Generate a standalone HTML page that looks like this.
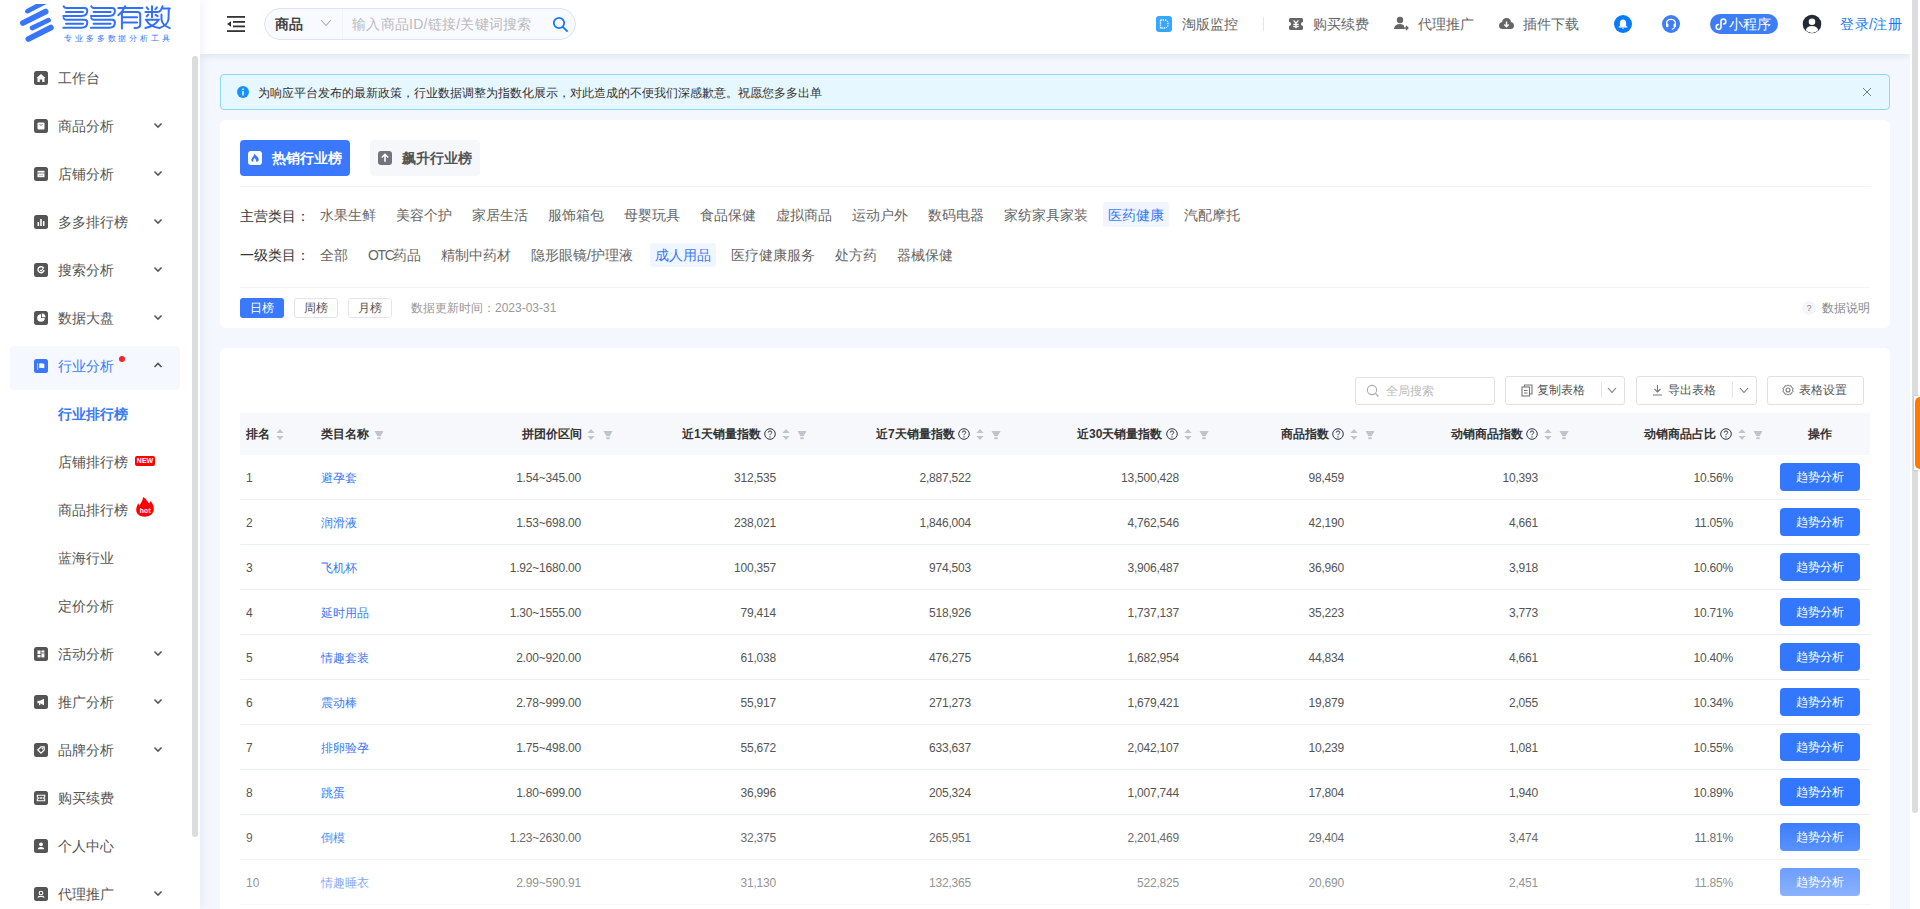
<!DOCTYPE html><html><head><meta charset="utf-8"><style>
*{margin:0;padding:0;box-sizing:border-box}
html,body{width:1920px;height:909px;overflow:hidden}
body{position:relative;background:#f4f7fd;font-family:"Liberation Sans",sans-serif;color:#333;font-size:14px}
.ab{position:absolute}
.t{position:absolute;white-space:nowrap}
.side{position:absolute;left:0;top:0;width:200px;height:909px;background:#fff;box-shadow:2px 0 10px rgba(40,60,140,.07);z-index:2}
.hdr{position:absolute;left:200px;top:0;width:1710px;height:54px;background:#fff;box-shadow:0 2px 7px rgba(40,60,130,.1)}
.mi{position:absolute;left:58px;font-size:14px;color:#555;line-height:20px;height:20px}
.ico{position:absolute;left:34px;width:14px;height:14px;background:#555;border-radius:3px}
.chev{position:absolute;left:154px;width:8px;height:6px}
.card{position:absolute;left:220px;width:1670px;background:#fff;border-radius:6px}
.cat{position:absolute;font-size:14px;color:#666;line-height:24px;height:24px;padding:0 5px;border-radius:3px}
.th{position:absolute;font-size:12px;font-weight:bold;color:#333;line-height:16px;top:426px}
.td{position:absolute;font-size:12px;color:#555;line-height:16px}
.btn{position:absolute;left:1780px;width:80px;height:28px;background:#3377ff;border-radius:4px;color:#fff;font-size:12px;line-height:28px;text-align:center}
</style></head><body>
<div class="side">
<svg class="ab" style="left:15px;top:0px" width="45" height="45" viewBox="0 0 45 45">
<g fill="#3875ff"><path d="M36 4 L46.5 4 L28.5 13.3 Q25.6 14.2 25 11.6 Q24.8 10 27 8.8Z" transform="translate(-15,0)"/></g>
<g stroke="#3875ff" stroke-linecap="round" fill="none" transform="translate(-15,0)">
<path d="M22.9 23 L45.6 11.6" stroke-width="5.8"/>
<path d="M32.2 28 L48.5 20.2" stroke-width="4.8"/>
<path d="M28.4 39 L50.8 27.6" stroke-width="5.8"/></g></svg>
<svg class="ab" style="left:0;top:0" width="180" height="34" viewBox="0 0 180 34"><g stroke="#3170ff" stroke-width="2" fill="none" stroke-linecap="round"><path d="M63.6 6.3 Q64.5 8 66.2 8 L84.5 8 Q87.3 8 87.3 10.8 Q87.3 16 81.5 16 L63.3 16 M66 11.9 L83 11.9 M63.6 18.1 Q64.5 19.8 66.2 19.8 L84.5 19.8 Q87.3 19.8 87.3 22.6 Q87.3 27.8 81.5 27.8 L63.3 27.8 M66 23.7 L83 23.7"/><path d="M63.6 6.3 Q64.5 8 66.2 8 L84.5 8 Q87.3 8 87.3 10.8 Q87.3 16 81.5 16 L63.3 16 M66 11.9 L83 11.9 M63.6 18.1 Q64.5 19.8 66.2 19.8 L84.5 19.8 Q87.3 19.8 87.3 22.6 Q87.3 27.8 81.5 27.8 L63.3 27.8 M66 23.7 L83 23.7" transform="translate(27.6,0)"/><path d="M118.3 7.95 L142.4 7.95 M125.2 6.3 Q122.5 12 118.3 15.2 M121.9 12.9 L121.9 28.4 M122.9 11.9 L137.5 11.9 Q140.2 11.9 140.2 14.5 L140.2 24.5 Q140.2 28.1 134.5 28.1 M122.6 17.2 L137.1 17.2 M122.6 22.5 L137.1 22.5"/><path d="M146.7 7.3 L148.3 9.3 M156.9 7.3 L155.3 9.3 M152 6.3 L152 17.2 M145.4 11.9 L157.9 11.9 Q161 11.9 162.5 6.3 M146.7 16.2 L148.3 14.6 M155.6 14.9 L157.6 16.2 M145.7 19.8 L158.6 19.8 Q155 26 145.4 28.1 M147 21.2 Q150 26.5 159.5 28.1 M161.5 8.6 L169.8 8.6 M168.8 8.6 L168.5 19 Q168 25 159.2 28.1 M161.5 14.6 L161.5 19.5 Q162 25 169.8 28.1"/></g></svg>
<div class="t" style="left:64px;top:34px;font-size:8px;line-height:10px;color:#3a78fb;letter-spacing:2.9px">专业多多数据分析工具</div>
<div class="ab" style="left:10px;top:346px;width:170px;height:44px;background:#f5f8ff;border-radius:4px"></div>
<svg class="ab" style="left:34px;top:71px" width="14" height="14" viewBox="0 0 14 14"><rect width="14" height="14" rx="2.5" fill="#555"/><path d="M7 3 L11.5 7 L10.5 7 L10.5 11 L8.2 11 L8.2 8.5 L5.8 8.5 L5.8 11 L3.5 11 L3.5 7 L2.5 7Z" fill="#fff"/></svg>
<div class="mi" style="top:68px;color:#555;font-weight:normal">工作台</div>
<svg class="ab" style="left:34px;top:119px" width="14" height="14" viewBox="0 0 14 14"><rect width="14" height="14" rx="2.5" fill="#555"/><rect x="3.5" y="3.5" width="7" height="7" rx="1" fill="#fff"/><path d="M5.5 5.5 Q7 7 8.5 5.5" stroke="#555" stroke-width=".8" fill="none"/></svg>
<div class="mi" style="top:116px;color:#555;font-weight:normal">商品分析</div>
<svg class="ab" style="left:153px;top:122px" width="10" height="7" viewBox="0 0 10 7"><path d="M1.5 1.5 L5 5 L8.5 1.5" stroke="#555" stroke-width="1.6" fill="none"/></svg>
<svg class="ab" style="left:34px;top:167px" width="14" height="14" viewBox="0 0 14 14"><rect width="14" height="14" rx="2.5" fill="#555"/><rect x="3.5" y="3.8" width="7" height="1.8" fill="#fff"/><rect x="3.5" y="6.4" width="7" height="3.8" fill="#fff"/><path d="M5 8.3 H9" stroke="#999" stroke-width=".7"/></svg>
<div class="mi" style="top:164px;color:#555;font-weight:normal">店铺分析</div>
<svg class="ab" style="left:153px;top:170px" width="10" height="7" viewBox="0 0 10 7"><path d="M1.5 1.5 L5 5 L8.5 1.5" stroke="#555" stroke-width="1.6" fill="none"/></svg>
<svg class="ab" style="left:34px;top:215px" width="14" height="14" viewBox="0 0 14 14"><rect width="14" height="14" rx="2.5" fill="#555"/><rect x="3.5" y="7" width="1.6" height="4" fill="#fff"/><rect x="6.2" y="4" width="1.6" height="7" fill="#fff"/><rect x="8.9" y="6" width="1.6" height="5" fill="#fff"/></svg>
<div class="mi" style="top:212px;color:#555;font-weight:normal">多多排行榜</div>
<svg class="ab" style="left:153px;top:218px" width="10" height="7" viewBox="0 0 10 7"><path d="M1.5 1.5 L5 5 L8.5 1.5" stroke="#555" stroke-width="1.6" fill="none"/></svg>
<svg class="ab" style="left:34px;top:263px" width="14" height="14" viewBox="0 0 14 14"><rect width="14" height="14" rx="2.5" fill="#555"/><path d="M9.6 5.2 A3 3 0 1 0 10 7" stroke="#fff" stroke-width="1.4" fill="none"/><path d="M6 7 L7.2 8 L9.5 5" stroke="#fff" stroke-width="1.1" fill="none"/></svg>
<div class="mi" style="top:260px;color:#555;font-weight:normal">搜索分析</div>
<svg class="ab" style="left:153px;top:266px" width="10" height="7" viewBox="0 0 10 7"><path d="M1.5 1.5 L5 5 L8.5 1.5" stroke="#555" stroke-width="1.6" fill="none"/></svg>
<svg class="ab" style="left:34px;top:311px" width="14" height="14" viewBox="0 0 14 14"><rect width="14" height="14" rx="2.5" fill="#555"/><path d="M7 3.2 A3.8 3.8 0 1 0 10.8 7 L7 7Z" fill="#fff"/><path d="M7.8 2.5 L7.8 6.2 L11.5 6.2 A3.7 3.7 0 0 0 7.8 2.5Z" fill="#fff"/></svg>
<div class="mi" style="top:308px;color:#555;font-weight:normal">数据大盘</div>
<svg class="ab" style="left:153px;top:314px" width="10" height="7" viewBox="0 0 10 7"><path d="M1.5 1.5 L5 5 L8.5 1.5" stroke="#555" stroke-width="1.6" fill="none"/></svg>
<svg class="ab" style="left:34px;top:359px" width="14" height="14" viewBox="0 0 14 14"><rect width="14" height="14" rx="2.5" fill="#3a78fb"/><rect x="3.2" y="4.2" width="0.9" height="6.7" fill="#c8d8ff"/><path d="M5.2 4.5 Q7.6 3.9 10.3 4.9 L10.3 9.3 Q7.6 8.4 5.2 9Z" fill="#fff"/></svg>
<div class="mi" style="top:356px;color:#3a78fb;font-weight:normal">行业分析</div>
<svg class="ab" style="left:153px;top:362px" width="10" height="7" viewBox="0 0 10 7"><path d="M1.5 5 L5 1.5 L8.5 5" stroke="#555" stroke-width="1.6" fill="none"/></svg>
<div class="mi" style="top:404px;color:#3a78fb;font-weight:bold">行业排行榜</div>
<div class="mi" style="top:452px;color:#555;font-weight:normal">店铺排行榜</div>
<div class="ab" style="left:135px;top:456px;width:20px;height:10px;background:#ff0000;border-radius:2px;color:#fff;font-size:7px;font-weight:bold;line-height:10px;text-align:center;font-family:&quot;Liberation Sans&quot;">NEW</div>
<div class="mi" style="top:500px;color:#555;font-weight:normal">商品排行榜</div>
<svg class="ab" style="left:130px;top:493px" width="30" height="28" viewBox="0 0 30 28"><path d="M13.2 4 C15 5 17 7.5 19.3 10.8 L20.3 8 C22.5 10 24 13 23.8 16.5 C23.5 21 19.5 23.7 14.8 23.7 C10 23.7 6.2 21 6.2 17 C6.2 14.5 7.2 12 8.3 10.2 L9.3 12.8 C10.5 10.5 12.7 8 13.2 4Z" fill="#ff0000"/><text x="15.4" y="19.9" font-size="6.8" font-weight="bold" fill="#fff" text-anchor="middle" font-family="Liberation Sans" letter-spacing="0.3">hot</text></svg>
<div class="mi" style="top:548px;color:#555;font-weight:normal">蓝海行业</div>
<div class="mi" style="top:596px;color:#555;font-weight:normal">定价分析</div>
<svg class="ab" style="left:34px;top:647px" width="14" height="14" viewBox="0 0 14 14"><rect width="14" height="14" rx="2.5" fill="#555"/><rect x="3.5" y="3.5" width="3" height="3.6" fill="#fff"/><rect x="7.4" y="3.5" width="3" height="2" fill="#fff"/><rect x="7.4" y="6.4" width="3" height="4" fill="#fff"/><rect x="3.5" y="8" width="3" height="2.4" fill="#fff"/></svg>
<div class="mi" style="top:644px;color:#555;font-weight:normal">活动分析</div>
<svg class="ab" style="left:153px;top:650px" width="10" height="7" viewBox="0 0 10 7"><path d="M1.5 1.5 L5 5 L8.5 1.5" stroke="#555" stroke-width="1.6" fill="none"/></svg>
<svg class="ab" style="left:34px;top:695px" width="14" height="14" viewBox="0 0 14 14"><rect width="14" height="14" rx="2.5" fill="#555"/><path d="M3.5 5.8 L6 5.8 L10 3.8 L10 10.2 L6 8.2 L3.5 8.2Z" fill="#fff"/><rect x="5" y="8.2" width="1.3" height="2" fill="#fff"/></svg>
<div class="mi" style="top:692px;color:#555;font-weight:normal">推广分析</div>
<svg class="ab" style="left:153px;top:698px" width="10" height="7" viewBox="0 0 10 7"><path d="M1.5 1.5 L5 5 L8.5 1.5" stroke="#555" stroke-width="1.6" fill="none"/></svg>
<svg class="ab" style="left:34px;top:743px" width="14" height="14" viewBox="0 0 14 14"><rect width="14" height="14" rx="2.5" fill="#555"/><path d="M3.8 7 L7 3.8 L10.2 3.8 L10.2 7 L7 10.2Z" stroke="#fff" stroke-width="1.2" fill="none"/><circle cx="8.4" cy="5.6" r="0.8" fill="#fff"/></svg>
<div class="mi" style="top:740px;color:#555;font-weight:normal">品牌分析</div>
<svg class="ab" style="left:153px;top:746px" width="10" height="7" viewBox="0 0 10 7"><path d="M1.5 1.5 L5 5 L8.5 1.5" stroke="#555" stroke-width="1.6" fill="none"/></svg>
<svg class="ab" style="left:34px;top:791px" width="14" height="14" viewBox="0 0 14 14"><rect width="14" height="14" rx="2.5" fill="#555"/><path d="M3.3 4.3 L10.7 4.3 L10.7 6 A1 1 0 0 0 10.7 8 L10.7 9.7 L3.3 9.7 L3.3 8 A1 1 0 0 0 3.3 6Z" stroke="#fff" stroke-width="1.1" fill="none"/><rect x="5.5" y="6.3" width="3" height="1.4" fill="#fff"/></svg>
<div class="mi" style="top:788px;color:#555;font-weight:normal">购买续费</div>
<svg class="ab" style="left:34px;top:839px" width="14" height="14" viewBox="0 0 14 14"><rect width="14" height="14" rx="2.5" fill="#555"/><circle cx="7" cy="5.3" r="1.9" fill="#fff"/><path d="M3.8 10.3 Q4 8 7 8 Q10 8 10.2 10.3Z" fill="#fff"/></svg>
<div class="mi" style="top:836px;color:#555;font-weight:normal">个人中心</div>
<svg class="ab" style="left:34px;top:887px" width="14" height="14" viewBox="0 0 14 14"><rect width="14" height="14" rx="2.5" fill="#555"/><circle cx="7" cy="6" r="1.8" stroke="#fff" stroke-width="1.1" fill="none"/><path d="M3.8 10.5 Q5 9 7 9.5 Q9 9 10.2 10.5" stroke="#fff" stroke-width="1.1" fill="none"/></svg>
<div class="mi" style="top:884px;color:#555;font-weight:normal">代理推广</div>
<svg class="ab" style="left:153px;top:890px" width="10" height="7" viewBox="0 0 10 7"><path d="M1.5 1.5 L5 5 L8.5 1.5" stroke="#555" stroke-width="1.6" fill="none"/></svg>
<div class="ab" style="left:119px;top:356px;width:6px;height:6px;border-radius:3px;background:#f5222d"></div>
<div class="ab" style="left:192px;top:56px;width:6px;height:781px;border-radius:3px;background:#dcdcdf"></div>
</div>
<div class="hdr"></div>
<svg class="ab" style="left:226px;top:15px" width="20" height="18" viewBox="0 0 20 18"><g fill="#333"><rect x="1" y="1" width="18" height="1.8"/><rect x="7" y="6" width="12" height="1.8"/><rect x="7" y="10.5" width="12" height="1.8"/><rect x="1" y="15.2" width="18" height="1.8"/><path d="M1 9 L5 6.2 L5 11.8Z"/></g></svg>
<div class="ab" style="left:264px;top:8px;width:312px;height:32px;border:1px solid #dbe3fb;border-radius:16px;background:#f8faff"></div>
<div class="ab" style="left:342px;top:9px;width:1px;height:30px;background:#f1f3fb"></div>
<div class="t" style="left:275px;top:14px;font-size:14px;line-height:20px;font-weight:bold;color:#444">商品</div>
<svg class="ab" style="left:320px;top:19px" width="12" height="8" viewBox="0 0 12 8"><path d="M1 1 L6 6.5 L11 1" stroke="#aaa" stroke-width="1.1" fill="none"/></svg>
<div class="t" style="left:352px;top:14px;font-size:14px;line-height:20px;color:#bbb;letter-spacing:.25px">输入商品ID/链接/关键词搜索</div>
<svg class="ab" style="left:552px;top:16px" width="17" height="17" viewBox="0 0 17 17"><circle cx="7" cy="7" r="5.2" stroke="#1677ff" stroke-width="1.8" fill="none"/><path d="M10.8 10.8 L15 15" stroke="#1677ff" stroke-width="1.8" stroke-linecap="round"/></svg>
<svg class="ab" style="left:1156px;top:16px" width="16" height="16" viewBox="0 0 16 16"><rect width="16" height="16" rx="3" fill="#37a6ff"/><path d="M4.5 4 L8.5 4 Q12 4 12 8 Q12 12 8.5 12 L4.5 12Z" stroke="#fff" stroke-width="1.3" stroke-dasharray="1.3 0.9" fill="none"/></svg>
<div class="t" style="left:1182px;top:14px;font-size:14px;line-height:20px;color:#666">淘版监控</div>
<div class="ab" style="left:1263px;top:17px;width:1px;height:14px;background:#e6e6e6"></div>
<svg class="ab" style="left:1289px;top:18px" width="14" height="12" viewBox="0 0 14 12"><path d="M0 1.5 Q0 0 1.5 0 L12.5 0 Q14 0 14 1.5 L14 4 A2 2 0 0 0 14 8 L14 10.5 Q14 12 12.5 12 L1.5 12 Q0 12 0 10.5 L0 8 A2 2 0 0 0 0 4Z" fill="#666"/><path d="M4.6 2.3 L7 5.2 L9.4 2.3 M7 5.2 L7 10.2 M4.3 6.3 L9.7 6.3 M4.3 8.5 L9.7 8.5" stroke="#fff" stroke-width="1.3" fill="none"/></svg>
<div class="t" style="left:1313px;top:14px;font-size:14px;line-height:20px;color:#666">购买续费</div>
<svg class="ab" style="left:1394px;top:16px" width="15" height="15" viewBox="0 0 15 15"><circle cx="6" cy="4" r="3.2" fill="#666"/><path d="M0 13 Q0.5 8 6 8 Q9 8 10 9.5 L10 13Z" fill="#666"/><path d="M9 12 L14 12 M12 10 L14 12 L12 14" stroke="#666" stroke-width="1.3" fill="none"/></svg>
<div class="t" style="left:1418px;top:14px;font-size:14px;line-height:20px;color:#666">代理推广</div>
<svg class="ab" style="left:1499px;top:17px" width="15" height="13" viewBox="0 0 15 13"><path d="M3.5 12 Q0 12 0 8.5 Q0 5.5 3 5.2 Q3.8 1 7.5 1 Q11.5 1 12 5 Q15 5.5 15 8.5 Q15 12 11.5 12Z" fill="#666"/><path d="M7.5 4.5 L7.5 9.5 M5.3 7.5 L7.5 9.7 L9.7 7.5" stroke="#fff" stroke-width="1.4" fill="none"/></svg>
<div class="t" style="left:1523px;top:14px;font-size:14px;line-height:20px;color:#666">插件下载</div>
<svg class="ab" style="left:1614px;top:15px" width="18" height="18" viewBox="0 0 18 18"><circle cx="9" cy="9" r="9" fill="#0a7aff"/><path d="M5.9 11.6 L5.9 8.2 Q5.9 4.5 9 4.5 Q12.1 4.5 12.1 8.2 L12.1 11.6Z" fill="#fff"/><rect x="4.6" y="11.2" width="8.8" height="1.3" rx=".5" fill="#fff"/><rect x="8.2" y="12.6" width="1.6" height="1" fill="#fff"/></svg>
<svg class="ab" style="left:1662px;top:15px" width="18" height="18" viewBox="0 0 18 18"><circle cx="9" cy="9" r="9" fill="#3d7ef7"/><path d="M4.6 10 L4.6 8.6 Q4.6 4.3 9 4.3 Q13.4 4.3 13.4 8.6 L13.4 10" stroke="#fff" stroke-width="1.3" fill="none"/><rect x="4" y="8.6" width="2.4" height="3.6" rx="1" fill="#fff"/><rect x="11.6" y="8.6" width="2.4" height="3.6" rx="1" fill="#fff"/><path d="M12.6 12.2 Q12.2 14.2 9.8 14.4" stroke="#fff" stroke-width="1.1" fill="none"/></svg>
<div class="ab" style="left:1710px;top:14px;width:68px;height:20px;border-radius:10px;background:#3d7ef7"></div>
<svg class="ab" style="left:1715px;top:16px" width="14" height="16" viewBox="0 0 14 16"><path d="M6 5.5 L6 11 Q6 13.5 3.5 13.5 Q1.2 13.5 1.2 11 Q1.2 8.5 3.5 8.5 M6 5.5 Q6 3 8.5 3 Q10.8 3 10.8 5.5 Q10.8 8 8.5 8" stroke="#fff" stroke-width="1.6" fill="none" stroke-linecap="round"/></svg>
<div class="t" style="left:1729px;top:14px;font-size:14px;line-height:20px;color:#fff">小程序</div>
<svg class="ab" style="left:1802px;top:14px" width="20" height="20" viewBox="0 0 20 20"><circle cx="10" cy="10" r="9.3" fill="#222a36"/><circle cx="10" cy="7.8" r="3.3" fill="#fff"/><path d="M3.8 16.2 Q5 12 10 12 Q15 12 16.2 16.2 Q13.5 19 10 19 Q6.5 19 3.8 16.2Z" fill="#fff"/></svg>
<div class="t" style="left:1840px;top:14px;font-size:14px;line-height:20px;color:#1677ff;letter-spacing:.5px">登录/注册</div>
<div class="ab" style="left:1910px;top:0;width:10px;height:909px;background:#fff"></div>
<div class="ab" style="left:1912px;top:0;width:6px;height:813px;border-radius:0 0 3px 3px;background:#dcdcdf"></div>
<div class="ab" style="left:1914px;top:396px;width:6px;height:74px;background:#fff;box-shadow:0 0 2px rgba(0,0,0,.25)"></div>
<div class="ab" style="left:1915px;top:397px;width:5px;height:72px;background:#ff7a00;border-radius:5px 0 0 5px"></div>
<div class="ab" style="left:220px;top:74px;width:1670px;height:36px;background:#e6f7ff;border:1px solid #91d5ff;border-radius:4px"></div>
<svg class="ab" style="left:236px;top:85px" width="14" height="14" viewBox="0 0 14 14"><circle cx="7" cy="7" r="6" fill="#1890ff"/><rect x="6.3" y="6" width="1.4" height="4.5" fill="#fff"/><rect x="6.3" y="3.6" width="1.4" height="1.4" fill="#fff"/></svg>
<div class="t" style="left:258px;top:85px;font-size:12px;line-height:16px;color:#333">为响应平台发布的最新政策，行业数据调整为指数化展示，对此造成的不便我们深感歉意。祝愿您多多出单</div>
<svg class="ab" style="left:1862px;top:87px" width="10" height="10" viewBox="0 0 10 10"><path d="M1 1 L9 9 M9 1 L1 9" stroke="#7a7a7a" stroke-width="1"/></svg>
<div class="card" style="top:120px;height:208px"></div>
<div class="ab" style="left:240px;top:140px;width:110px;height:36px;background:#3a78ff;border-radius:4px"></div>
<svg class="ab" style="left:248px;top:151px" width="14" height="14" viewBox="0 0 14 14"><rect width="14" height="14" rx="3" fill="#fff"/><path d="M6.6 2.2 C7.1 3.6 7.6 4.1 8.6 5 C10.1 6.1 11 8 10.6 9.4 L9.4 10.8 L8.1 10.8 C8.3 9.2 7.6 8 6.6 7 C5.6 8 5 9.2 5.3 10.8 L4.2 10.8 C3 9.6 3.1 8 4 6.9 C5 5.6 6.2 4.5 6.6 2.2Z" fill="#3a78ff"/></svg>
<div class="t" style="left:272px;top:148px;font-size:14px;line-height:20px;font-weight:bold;color:#fff">热销行业榜</div>
<div class="ab" style="left:370px;top:140px;width:110px;height:36px;background:#f6f7fb;border-radius:4px"></div>
<svg class="ab" style="left:378px;top:151px" width="14" height="14" viewBox="0 0 14 14"><rect width="14" height="14" rx="3" fill="#71747c"/><path d="M7 3.3 L7 10.8 M3.8 6.5 L7 3.3 L10.2 6.5" stroke="#fff" stroke-width="1.6" fill="none"/></svg>
<div class="t" style="left:402px;top:148px;font-size:14px;line-height:20px;font-weight:bold;color:#555">飙升行业榜</div>
<div class="ab" style="left:240px;top:186px;width:1630px;height:1px;background:#f2f3f7"></div>
<div class="t" style="left:240px;top:206px;font-size:14px;line-height:20px;color:#333">主营类目：</div>
<div class="cat" style="left:315px;top:202px;height:25px;line-height:26px;">水果生鲜</div>
<div class="cat" style="left:391px;top:202px;height:25px;line-height:26px;">美容个护</div>
<div class="cat" style="left:467px;top:202px;height:25px;line-height:26px;">家居生活</div>
<div class="cat" style="left:543px;top:202px;height:25px;line-height:26px;">服饰箱包</div>
<div class="cat" style="left:619px;top:202px;height:25px;line-height:26px;">母婴玩具</div>
<div class="cat" style="left:695px;top:202px;height:25px;line-height:26px;">食品保健</div>
<div class="cat" style="left:771px;top:202px;height:25px;line-height:26px;">虚拟商品</div>
<div class="cat" style="left:847px;top:202px;height:25px;line-height:26px;">运动户外</div>
<div class="cat" style="left:923px;top:202px;height:25px;line-height:26px;">数码电器</div>
<div class="cat" style="left:999px;top:202px;height:25px;line-height:26px;">家纺家具家装</div>
<div class="cat" style="left:1103px;top:202px;height:25px;line-height:26px;color:#3a78fb;background:#f1f5ff;">医药健康</div>
<div class="cat" style="left:1179px;top:202px;height:25px;line-height:26px;">汽配摩托</div>
<div class="t" style="left:240px;top:245px;font-size:14px;line-height:20px;color:#333">一级类目：</div>
<div class="cat" style="left:315px;top:243px;">全部</div>
<div class="cat" style="left:363px;top:243px;"><span style="letter-spacing:-1.4px">OTC</span>药品</div>
<div class="cat" style="left:436px;top:243px;">精制中药材</div>
<div class="cat" style="left:526px;top:243px;">隐形眼镜/护理液</div>
<div class="cat" style="left:650px;top:243px;color:#3a78fb;background:#f1f5ff;">成人用品</div>
<div class="cat" style="left:726px;top:243px;">医疗健康服务</div>
<div class="cat" style="left:830px;top:243px;">处方药</div>
<div class="cat" style="left:892px;top:243px;">器械保健</div>
<div class="ab" style="left:240px;top:287px;width:1630px;height:1px;background:#f2f3f7"></div>
<div class="ab" style="left:240px;top:298px;width:44px;height:20px;background:#3a78ff;border-radius:3px;color:#fff;font-size:12px;line-height:20px;text-align:center">日榜</div>
<div class="ab" style="left:294px;top:298px;width:44px;height:20px;border:1px solid #e3e5ea;border-radius:3px;color:#555;font-size:12px;line-height:18px;text-align:center">周榜</div>
<div class="ab" style="left:348px;top:298px;width:44px;height:20px;border:1px solid #e3e5ea;border-radius:3px;color:#555;font-size:12px;line-height:18px;text-align:center">月榜</div>
<div class="t" style="left:411px;top:300px;font-size:12px;line-height:16px;color:#999">数据更新时间：2023-03-31</div>
<div class="ab" style="left:1802px;top:301px;width:14px;height:14px;border-radius:7px;background:#f3f5fa;color:#888;font-size:9px;line-height:14px;text-align:center">?</div>
<div class="t" style="left:1822px;top:300px;font-size:12px;line-height:16px;color:#888">数据说明</div>
<div class="card" style="top:348px;height:600px"></div>
<div class="ab" style="left:1355px;top:377px;width:140px;height:28px;border:1px solid #dfe1e6;border-radius:3px"></div>
<svg class="ab" style="left:1366px;top:384px" width="14" height="14" viewBox="0 0 14 14"><circle cx="6" cy="6" r="4.6" stroke="#aaa" stroke-width="1.1" fill="none"/><path d="M9.4 9.4 L12.5 12.5" stroke="#aaa" stroke-width="1.1"/></svg>
<div class="t" style="left:1386px;top:383px;font-size:12px;line-height:16px;color:#bbb">全局搜索</div>
<div class="ab" style="left:1505px;top:376px;width:120px;height:29px;border:1px solid #dfe1e6;border-radius:3px"></div>
<div class="ab" style="left:1601px;top:382px;width:1px;height:16px;background:#e6e6e6"></div>
<svg class="ab" style="left:1607px;top:387px" width="10" height="7" viewBox="0 0 10 7"><path d="M1 1 L5 5.5 L9 1" stroke="#777" stroke-width="1.1" fill="none"/></svg>
<svg class="ab" style="left:1521px;top:384px" width="12" height="13" viewBox="0 0 12 13"><rect x="1" y="3" width="7.5" height="9" stroke="#777" stroke-width="1.1" fill="none"/><path d="M3.5 3 L3.5 1 L11 1 L11 10 L8.5 10" stroke="#777" stroke-width="1.1" fill="none"/><path d="M3 6.5 L6.5 6.5 M3 9 L6.5 9" stroke="#777" stroke-width="1"/></svg>
<div class="t" style="left:1537px;top:382px;font-size:12px;line-height:16px;color:#555">复制表格</div>
<div class="ab" style="left:1636px;top:376px;width:121px;height:29px;border:1px solid #dfe1e6;border-radius:3px"></div>
<div class="ab" style="left:1732px;top:382px;width:1px;height:16px;background:#e6e6e6"></div>
<svg class="ab" style="left:1739px;top:387px" width="10" height="7" viewBox="0 0 10 7"><path d="M1 1 L5 5.5 L9 1" stroke="#777" stroke-width="1.1" fill="none"/></svg>
<svg class="ab" style="left:1652px;top:384px" width="11" height="12" viewBox="0 0 11 12"><path d="M5.5 1 L5.5 8 M2.5 5 L5.5 8 L8.5 5 M1 11 L10 11" stroke="#777" stroke-width="1.1" fill="none"/></svg>
<div class="t" style="left:1668px;top:382px;font-size:12px;line-height:16px;color:#555">导出表格</div>
<div class="ab" style="left:1767px;top:376px;width:97px;height:29px;border:1px solid #dfe1e6;border-radius:3px"></div>
<svg class="ab" style="left:1782px;top:384px" width="12" height="12" viewBox="0 0 12 12"><circle cx="6" cy="6" r="2" stroke="#777" stroke-width="1.1" fill="none"/><path d="M6 0.8 L7.2 2 L9 1.7 L9.5 3.4 L11.1 4.3 L10.5 6 L11.1 7.7 L9.5 8.6 L9 10.3 L7.2 10 L6 11.2 L4.8 10 L3 10.3 L2.5 8.6 L0.9 7.7 L1.5 6 L0.9 4.3 L2.5 3.4 L3 1.7 L4.8 2Z" stroke="#777" stroke-width="1" fill="none"/></svg>
<div class="t" style="left:1799px;top:382px;font-size:12px;line-height:16px;color:#555">表格设置</div>
<div class="ab" style="left:240px;top:413px;width:1630px;height:42px;background:#f7f8fc"></div>
<div class="th" style="left:246px">排名</div>
<svg class="ab" style="left:276px;top:428px" width="8" height="13" viewBox="0 0 8 13"><path d="M4 1 L7.6 5 L0.4 5Z M0.4 8 L7.6 8 L4 12Z" fill="#c0c4cc"/></svg>
<div class="th" style="left:321px">类目名称</div>
<svg class="ab" style="left:374px;top:430px" width="10" height="10" viewBox="0 0 10 10"><path d="M0.5 1 L9.6 1 L6.6 6.2 L3.5 6.2Z" fill="#c0c4cc"/><rect x="3.3" y="7.3" width="3.4" height="1.9" fill="#c0c4cc"/></svg>
<div class="th" style="left:522px">拼团价区间</div>
<svg class="ab" style="left:587px;top:428px" width="8" height="13" viewBox="0 0 8 13"><path d="M4 1 L7.6 5 L0.4 5Z M0.4 8 L7.6 8 L4 12Z" fill="#c0c4cc"/></svg>
<svg class="ab" style="left:603px;top:430px" width="10" height="10" viewBox="0 0 10 10"><path d="M0.5 1 L9.6 1 L6.6 6.2 L3.5 6.2Z" fill="#c0c4cc"/><rect x="3.3" y="7.3" width="3.4" height="1.9" fill="#c0c4cc"/></svg>
<div class="th" style="left:682px">近1天销量指数</div>
<svg class="ab" style="left:764px;top:428px" width="12" height="12" viewBox="0 0 12 12"><circle cx="6" cy="6" r="5.3" stroke="#2f3441" stroke-width="1" fill="none"/><path d="M4.3 4.6 Q4.3 2.9 6 2.9 Q7.7 2.9 7.7 4.4 Q7.7 5.4 6.6 5.9 Q6 6.2 6 7.2" stroke="#2f3441" stroke-width="1" fill="none"/><circle cx="6" cy="8.9" r=".65" fill="#2f3441"/></svg>
<svg class="ab" style="left:782px;top:428px" width="8" height="13" viewBox="0 0 8 13"><path d="M4 1 L7.6 5 L0.4 5Z M0.4 8 L7.6 8 L4 12Z" fill="#c0c4cc"/></svg>
<svg class="ab" style="left:797px;top:430px" width="10" height="10" viewBox="0 0 10 10"><path d="M0.5 1 L9.6 1 L6.6 6.2 L3.5 6.2Z" fill="#c0c4cc"/><rect x="3.3" y="7.3" width="3.4" height="1.9" fill="#c0c4cc"/></svg>
<div class="th" style="left:876px">近7天销量指数</div>
<svg class="ab" style="left:958px;top:428px" width="12" height="12" viewBox="0 0 12 12"><circle cx="6" cy="6" r="5.3" stroke="#2f3441" stroke-width="1" fill="none"/><path d="M4.3 4.6 Q4.3 2.9 6 2.9 Q7.7 2.9 7.7 4.4 Q7.7 5.4 6.6 5.9 Q6 6.2 6 7.2" stroke="#2f3441" stroke-width="1" fill="none"/><circle cx="6" cy="8.9" r=".65" fill="#2f3441"/></svg>
<svg class="ab" style="left:976px;top:428px" width="8" height="13" viewBox="0 0 8 13"><path d="M4 1 L7.6 5 L0.4 5Z M0.4 8 L7.6 8 L4 12Z" fill="#c0c4cc"/></svg>
<svg class="ab" style="left:991px;top:430px" width="10" height="10" viewBox="0 0 10 10"><path d="M0.5 1 L9.6 1 L6.6 6.2 L3.5 6.2Z" fill="#c0c4cc"/><rect x="3.3" y="7.3" width="3.4" height="1.9" fill="#c0c4cc"/></svg>
<div class="th" style="left:1077px">近30天销量指数</div>
<svg class="ab" style="left:1166px;top:428px" width="12" height="12" viewBox="0 0 12 12"><circle cx="6" cy="6" r="5.3" stroke="#2f3441" stroke-width="1" fill="none"/><path d="M4.3 4.6 Q4.3 2.9 6 2.9 Q7.7 2.9 7.7 4.4 Q7.7 5.4 6.6 5.9 Q6 6.2 6 7.2" stroke="#2f3441" stroke-width="1" fill="none"/><circle cx="6" cy="8.9" r=".65" fill="#2f3441"/></svg>
<svg class="ab" style="left:1184px;top:428px" width="8" height="13" viewBox="0 0 8 13"><path d="M4 1 L7.6 5 L0.4 5Z M0.4 8 L7.6 8 L4 12Z" fill="#c0c4cc"/></svg>
<svg class="ab" style="left:1199px;top:430px" width="10" height="10" viewBox="0 0 10 10"><path d="M0.5 1 L9.6 1 L6.6 6.2 L3.5 6.2Z" fill="#c0c4cc"/><rect x="3.3" y="7.3" width="3.4" height="1.9" fill="#c0c4cc"/></svg>
<div class="th" style="left:1281px">商品指数</div>
<svg class="ab" style="left:1332px;top:428px" width="12" height="12" viewBox="0 0 12 12"><circle cx="6" cy="6" r="5.3" stroke="#2f3441" stroke-width="1" fill="none"/><path d="M4.3 4.6 Q4.3 2.9 6 2.9 Q7.7 2.9 7.7 4.4 Q7.7 5.4 6.6 5.9 Q6 6.2 6 7.2" stroke="#2f3441" stroke-width="1" fill="none"/><circle cx="6" cy="8.9" r=".65" fill="#2f3441"/></svg>
<svg class="ab" style="left:1350px;top:428px" width="8" height="13" viewBox="0 0 8 13"><path d="M4 1 L7.6 5 L0.4 5Z M0.4 8 L7.6 8 L4 12Z" fill="#c0c4cc"/></svg>
<svg class="ab" style="left:1365px;top:430px" width="10" height="10" viewBox="0 0 10 10"><path d="M0.5 1 L9.6 1 L6.6 6.2 L3.5 6.2Z" fill="#c0c4cc"/><rect x="3.3" y="7.3" width="3.4" height="1.9" fill="#c0c4cc"/></svg>
<div class="th" style="left:1451px">动销商品指数</div>
<svg class="ab" style="left:1526px;top:428px" width="12" height="12" viewBox="0 0 12 12"><circle cx="6" cy="6" r="5.3" stroke="#2f3441" stroke-width="1" fill="none"/><path d="M4.3 4.6 Q4.3 2.9 6 2.9 Q7.7 2.9 7.7 4.4 Q7.7 5.4 6.6 5.9 Q6 6.2 6 7.2" stroke="#2f3441" stroke-width="1" fill="none"/><circle cx="6" cy="8.9" r=".65" fill="#2f3441"/></svg>
<svg class="ab" style="left:1544px;top:428px" width="8" height="13" viewBox="0 0 8 13"><path d="M4 1 L7.6 5 L0.4 5Z M0.4 8 L7.6 8 L4 12Z" fill="#c0c4cc"/></svg>
<svg class="ab" style="left:1559px;top:430px" width="10" height="10" viewBox="0 0 10 10"><path d="M0.5 1 L9.6 1 L6.6 6.2 L3.5 6.2Z" fill="#c0c4cc"/><rect x="3.3" y="7.3" width="3.4" height="1.9" fill="#c0c4cc"/></svg>
<div class="th" style="left:1644px">动销商品占比</div>
<svg class="ab" style="left:1720px;top:428px" width="12" height="12" viewBox="0 0 12 12"><circle cx="6" cy="6" r="5.3" stroke="#2f3441" stroke-width="1" fill="none"/><path d="M4.3 4.6 Q4.3 2.9 6 2.9 Q7.7 2.9 7.7 4.4 Q7.7 5.4 6.6 5.9 Q6 6.2 6 7.2" stroke="#2f3441" stroke-width="1" fill="none"/><circle cx="6" cy="8.9" r=".65" fill="#2f3441"/></svg>
<svg class="ab" style="left:1738px;top:428px" width="8" height="13" viewBox="0 0 8 13"><path d="M4 1 L7.6 5 L0.4 5Z M0.4 8 L7.6 8 L4 12Z" fill="#c0c4cc"/></svg>
<svg class="ab" style="left:1753px;top:430px" width="10" height="10" viewBox="0 0 10 10"><path d="M0.5 1 L9.6 1 L6.6 6.2 L3.5 6.2Z" fill="#c0c4cc"/><rect x="3.3" y="7.3" width="3.4" height="1.9" fill="#c0c4cc"/></svg>
<div class="th" style="left:1808px">操作</div>
<div class="td" style="left:246px;top:470px">1</div>
<div class="td" style="left:321px;top:470px;color:#3a78fb">避孕套</div>
<div class="td" style="right:1339px;top:470px;text-align:right;letter-spacing:-0.2px">1.54~345.00</div>
<div class="td" style="right:1144px;top:470px;text-align:right;letter-spacing:-0.2px">312,535</div>
<div class="td" style="right:949px;top:470px;text-align:right;letter-spacing:-0.2px">2,887,522</div>
<div class="td" style="right:741px;top:470px;text-align:right;letter-spacing:-0.2px">13,500,428</div>
<div class="td" style="right:576px;top:470px;text-align:right;letter-spacing:-0.2px">98,459</div>
<div class="td" style="right:382px;top:470px;text-align:right;letter-spacing:-0.2px">10,393</div>
<div class="td" style="right:187px;top:470px;text-align:right;letter-spacing:-0.2px">10.56%</div>
<div class="btn" style="top:463px">趋势分析</div>
<div class="ab" style="left:240px;top:499px;width:1630px;height:1px;background:#eceef5"></div>
<div class="td" style="left:246px;top:515px">2</div>
<div class="td" style="left:321px;top:515px;color:#3a78fb">润滑液</div>
<div class="td" style="right:1339px;top:515px;text-align:right;letter-spacing:-0.2px">1.53~698.00</div>
<div class="td" style="right:1144px;top:515px;text-align:right;letter-spacing:-0.2px">238,021</div>
<div class="td" style="right:949px;top:515px;text-align:right;letter-spacing:-0.2px">1,846,004</div>
<div class="td" style="right:741px;top:515px;text-align:right;letter-spacing:-0.2px">4,762,546</div>
<div class="td" style="right:576px;top:515px;text-align:right;letter-spacing:-0.2px">42,190</div>
<div class="td" style="right:382px;top:515px;text-align:right;letter-spacing:-0.2px">4,661</div>
<div class="td" style="right:187px;top:515px;text-align:right;letter-spacing:-0.2px">11.05%</div>
<div class="btn" style="top:508px">趋势分析</div>
<div class="ab" style="left:240px;top:544px;width:1630px;height:1px;background:#eceef5"></div>
<div class="td" style="left:246px;top:560px">3</div>
<div class="td" style="left:321px;top:560px;color:#3a78fb">飞机杯</div>
<div class="td" style="right:1339px;top:560px;text-align:right;letter-spacing:-0.2px">1.92~1680.00</div>
<div class="td" style="right:1144px;top:560px;text-align:right;letter-spacing:-0.2px">100,357</div>
<div class="td" style="right:949px;top:560px;text-align:right;letter-spacing:-0.2px">974,503</div>
<div class="td" style="right:741px;top:560px;text-align:right;letter-spacing:-0.2px">3,906,487</div>
<div class="td" style="right:576px;top:560px;text-align:right;letter-spacing:-0.2px">36,960</div>
<div class="td" style="right:382px;top:560px;text-align:right;letter-spacing:-0.2px">3,918</div>
<div class="td" style="right:187px;top:560px;text-align:right;letter-spacing:-0.2px">10.60%</div>
<div class="btn" style="top:553px">趋势分析</div>
<div class="ab" style="left:240px;top:589px;width:1630px;height:1px;background:#eceef5"></div>
<div class="td" style="left:246px;top:605px">4</div>
<div class="td" style="left:321px;top:605px;color:#3a78fb">延时用品</div>
<div class="td" style="right:1339px;top:605px;text-align:right;letter-spacing:-0.2px">1.30~1555.00</div>
<div class="td" style="right:1144px;top:605px;text-align:right;letter-spacing:-0.2px">79,414</div>
<div class="td" style="right:949px;top:605px;text-align:right;letter-spacing:-0.2px">518,926</div>
<div class="td" style="right:741px;top:605px;text-align:right;letter-spacing:-0.2px">1,737,137</div>
<div class="td" style="right:576px;top:605px;text-align:right;letter-spacing:-0.2px">35,223</div>
<div class="td" style="right:382px;top:605px;text-align:right;letter-spacing:-0.2px">3,773</div>
<div class="td" style="right:187px;top:605px;text-align:right;letter-spacing:-0.2px">10.71%</div>
<div class="btn" style="top:598px">趋势分析</div>
<div class="ab" style="left:240px;top:634px;width:1630px;height:1px;background:#eceef5"></div>
<div class="td" style="left:246px;top:650px">5</div>
<div class="td" style="left:321px;top:650px;color:#3a78fb">情趣套装</div>
<div class="td" style="right:1339px;top:650px;text-align:right;letter-spacing:-0.2px">2.00~920.00</div>
<div class="td" style="right:1144px;top:650px;text-align:right;letter-spacing:-0.2px">61,038</div>
<div class="td" style="right:949px;top:650px;text-align:right;letter-spacing:-0.2px">476,275</div>
<div class="td" style="right:741px;top:650px;text-align:right;letter-spacing:-0.2px">1,682,954</div>
<div class="td" style="right:576px;top:650px;text-align:right;letter-spacing:-0.2px">44,834</div>
<div class="td" style="right:382px;top:650px;text-align:right;letter-spacing:-0.2px">4,661</div>
<div class="td" style="right:187px;top:650px;text-align:right;letter-spacing:-0.2px">10.40%</div>
<div class="btn" style="top:643px">趋势分析</div>
<div class="ab" style="left:240px;top:679px;width:1630px;height:1px;background:#eceef5"></div>
<div class="td" style="left:246px;top:695px">6</div>
<div class="td" style="left:321px;top:695px;color:#3a78fb">震动棒</div>
<div class="td" style="right:1339px;top:695px;text-align:right;letter-spacing:-0.2px">2.78~999.00</div>
<div class="td" style="right:1144px;top:695px;text-align:right;letter-spacing:-0.2px">55,917</div>
<div class="td" style="right:949px;top:695px;text-align:right;letter-spacing:-0.2px">271,273</div>
<div class="td" style="right:741px;top:695px;text-align:right;letter-spacing:-0.2px">1,679,421</div>
<div class="td" style="right:576px;top:695px;text-align:right;letter-spacing:-0.2px">19,879</div>
<div class="td" style="right:382px;top:695px;text-align:right;letter-spacing:-0.2px">2,055</div>
<div class="td" style="right:187px;top:695px;text-align:right;letter-spacing:-0.2px">10.34%</div>
<div class="btn" style="top:688px">趋势分析</div>
<div class="ab" style="left:240px;top:724px;width:1630px;height:1px;background:#eceef5"></div>
<div class="td" style="left:246px;top:740px">7</div>
<div class="td" style="left:321px;top:740px;color:#3a78fb">排卵验孕</div>
<div class="td" style="right:1339px;top:740px;text-align:right;letter-spacing:-0.2px">1.75~498.00</div>
<div class="td" style="right:1144px;top:740px;text-align:right;letter-spacing:-0.2px">55,672</div>
<div class="td" style="right:949px;top:740px;text-align:right;letter-spacing:-0.2px">633,637</div>
<div class="td" style="right:741px;top:740px;text-align:right;letter-spacing:-0.2px">2,042,107</div>
<div class="td" style="right:576px;top:740px;text-align:right;letter-spacing:-0.2px">10,239</div>
<div class="td" style="right:382px;top:740px;text-align:right;letter-spacing:-0.2px">1,081</div>
<div class="td" style="right:187px;top:740px;text-align:right;letter-spacing:-0.2px">10.55%</div>
<div class="btn" style="top:733px">趋势分析</div>
<div class="ab" style="left:240px;top:769px;width:1630px;height:1px;background:#eceef5"></div>
<div class="td" style="left:246px;top:785px">8</div>
<div class="td" style="left:321px;top:785px;color:#3a78fb">跳蛋</div>
<div class="td" style="right:1339px;top:785px;text-align:right;letter-spacing:-0.2px">1.80~699.00</div>
<div class="td" style="right:1144px;top:785px;text-align:right;letter-spacing:-0.2px">36,996</div>
<div class="td" style="right:949px;top:785px;text-align:right;letter-spacing:-0.2px">205,324</div>
<div class="td" style="right:741px;top:785px;text-align:right;letter-spacing:-0.2px">1,007,744</div>
<div class="td" style="right:576px;top:785px;text-align:right;letter-spacing:-0.2px">17,804</div>
<div class="td" style="right:382px;top:785px;text-align:right;letter-spacing:-0.2px">1,940</div>
<div class="td" style="right:187px;top:785px;text-align:right;letter-spacing:-0.2px">10.89%</div>
<div class="btn" style="top:778px">趋势分析</div>
<div class="ab" style="left:240px;top:814px;width:1630px;height:1px;background:#eceef5"></div>
<div class="td" style="left:246px;top:830px">9</div>
<div class="td" style="left:321px;top:830px;color:#3a78fb">倒模</div>
<div class="td" style="right:1339px;top:830px;text-align:right;letter-spacing:-0.2px">1.23~2630.00</div>
<div class="td" style="right:1144px;top:830px;text-align:right;letter-spacing:-0.2px">32,375</div>
<div class="td" style="right:949px;top:830px;text-align:right;letter-spacing:-0.2px">265,951</div>
<div class="td" style="right:741px;top:830px;text-align:right;letter-spacing:-0.2px">2,201,469</div>
<div class="td" style="right:576px;top:830px;text-align:right;letter-spacing:-0.2px">29,404</div>
<div class="td" style="right:382px;top:830px;text-align:right;letter-spacing:-0.2px">3,474</div>
<div class="td" style="right:187px;top:830px;text-align:right;letter-spacing:-0.2px">11.81%</div>
<div class="btn" style="top:823px">趋势分析</div>
<div class="ab" style="left:240px;top:859px;width:1630px;height:1px;background:#eceef5"></div>
<div class="td" style="left:246px;top:875px">10</div>
<div class="td" style="left:321px;top:875px;color:#3a78fb">情趣睡衣</div>
<div class="td" style="right:1339px;top:875px;text-align:right;letter-spacing:-0.2px">2.99~590.91</div>
<div class="td" style="right:1144px;top:875px;text-align:right;letter-spacing:-0.2px">31,130</div>
<div class="td" style="right:949px;top:875px;text-align:right;letter-spacing:-0.2px">132,365</div>
<div class="td" style="right:741px;top:875px;text-align:right;letter-spacing:-0.2px">522,825</div>
<div class="td" style="right:576px;top:875px;text-align:right;letter-spacing:-0.2px">20,690</div>
<div class="td" style="right:382px;top:875px;text-align:right;letter-spacing:-0.2px">2,451</div>
<div class="td" style="right:187px;top:875px;text-align:right;letter-spacing:-0.2px">11.85%</div>
<div class="btn" style="top:868px">趋势分析</div>
<div class="ab" style="left:240px;top:904px;width:1630px;height:1px;background:#eceef5"></div>
<div class="ab" style="left:220px;top:815px;width:1670px;height:94px;background:linear-gradient(rgba(255,255,255,0),rgba(255,255,255,.5))"></div>
</body></html>
